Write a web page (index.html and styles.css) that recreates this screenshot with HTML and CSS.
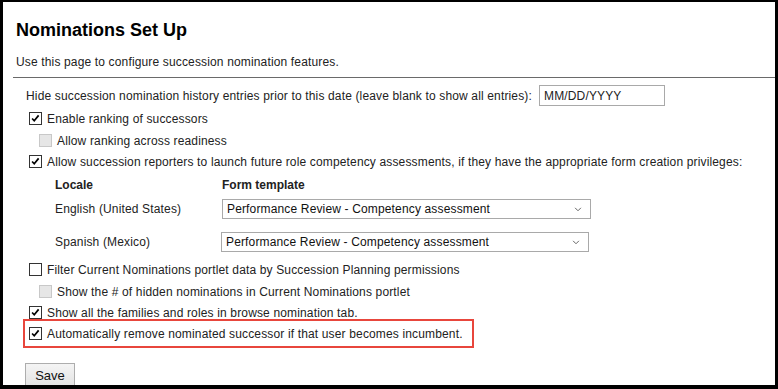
FILE: index.html
```html
<!DOCTYPE html>
<html lang="en">
<head>
    <meta charset="UTF-8">
    <title>Nominations Set Up</title>
    <link rel="stylesheet" href="styles.css">
</head>
<body>
    <div class="frame">
        <div class="panel">
            <h1 class="title">Nominations Set Up</h1>
            <p class="intro">Use this page to configure succession nomination features.</p>

            <div class="settings">
                <div class="row date-row">
                    <label for="historyDate">Hide succession nomination history entries prior to this date (leave blank to show all entries):</label>
                    <input id="historyDate" class="date-input" type="text" value="MM/DD/YYYY">
                </div>

                <div class="row">
                    <span class="box checked"><svg viewBox="0 0 13 13"><path d="M2.5 6.5 L5 9.2 L10.2 2.8"/></svg></span>
                    <span>Enable ranking of successors</span>
                </div>
                <div class="row sub">
                    <span class="box disabled"></span>
                    <span>Allow ranking across readiness</span>
                </div>
                <div class="row tight">
                    <span class="box checked"><svg viewBox="0 0 13 13"><path d="M2.5 6.5 L5 9.2 L10.2 2.8"/></svg></span>
                    <span>Allow succession reporters to launch future role competency assessments, if they have the appropriate form creation privileges:</span>
                </div>

                <div class="locales">
                    <div class="locale-head">
                        <span class="locale-name">Locale</span>
                        <span>Form template</span>
                    </div>
                    <div class="locale-row">
                        <span class="locale-name">English (United States)</span>
                        <div class="select">
                            <span>Performance Review - Competency assessment</span>
                            <svg viewBox="0 0 9 6"><path d="M1 1 L4.5 4.5 L8 1"/></svg>
                        </div>
                    </div>
                    <div class="locale-row spaced">
                        <span class="locale-name">Spanish (Mexico)</span>
                        <div class="select narrow">
                            <span>Performance Review - Competency assessment</span>
                            <svg viewBox="0 0 9 6"><path d="M1 1 L4.5 4.5 L8 1"/></svg>
                        </div>
                    </div>
                </div>

                <div class="row filter-row">
                    <span class="box"></span>
                    <span>Filter Current Nominations portlet data by Succession Planning permissions</span>
                </div>
                <div class="row sub">
                    <span class="box disabled"></span>
                    <span>Show the # of hidden nominations in Current Nominations portlet</span>
                </div>
                <div class="row tight">
                    <span class="box checked"><svg viewBox="0 0 13 13"><path d="M2.5 6.5 L5 9.2 L10.2 2.8"/></svg></span>
                    <span>Show all the families and roles in browse nomination tab.</span>
                </div>

                <div class="highlight">
                    <div class="row">
                        <span class="box checked"><svg viewBox="0 0 13 13"><path d="M2.5 6.5 L5 9.2 L10.2 2.8"/></svg></span>
                        <span>Automatically remove nominated successor if that user becomes incumbent.</span>
                    </div>
                </div>

                <button type="button" class="save">Save</button>
            </div>
        </div>
    </div>
</body>
</html>
```

FILE: styles.css
```css
body {
    margin: 0;
    background-color: #000;
    font-family: "Liberation Sans", Arial, sans-serif;
    color: #222;
}
.frame {
    height: 389px;
    padding: 2px 3px 4px 3px;
    box-sizing: border-box;
}
.panel {
    height: 100%;
    background-color: #fff;
    overflow: hidden;
    padding: 17px 0 0 10px;
    box-sizing: border-box;
}
.title {
    margin: 0 0 0 3px;
    font-size: 18px;
    line-height: 22px;
    font-weight: bold;
    color: #000;
}
.intro {
    margin: 13px 0 7px 3px;
    font-size: 12px;
    line-height: 16px;
    letter-spacing: 0.15px;
}
.settings {
    border-top: 1px solid #6a6a6a;
    padding-top: 7px;
    font-size: 12px;
    letter-spacing: 0.15px;
}
.row {
    display: flex;
    align-items: center;
    gap: 5px;
    height: 21px;
    padding-left: 16px;
    white-space: nowrap;
}
.row + .row {
    margin-top: 1px;
}
.row.tight {
    margin-top: 0;
}
.date-row {
    padding-left: 13px;
    gap: 7px;
    margin-bottom: 2px;
}
.date-input {
    width: 126px;
    height: 21px;
    box-sizing: border-box;
    border: 1px solid #a9a9a9;
    padding: 0 4px;
    font: 12px "Liberation Sans", Arial, sans-serif;
    letter-spacing: 0.15px;
    color: #222;
    outline: none;
}
.row.sub {
    padding-left: 26px;
}
.box {
    width: 13px;
    height: 13px;
    box-sizing: border-box;
    border: 1px solid #333;
    background-color: #fff;
    flex: none;
    display: flex;
}
.box svg {
    width: 11px;
    height: 11px;
    fill: none;
    stroke: #000;
    stroke-width: 2;
}
.box.disabled {
    border-color: #c8c8c8;
    background-color: #e6e6e6;
}
.locales {
    margin-top: 3px;
    padding-left: 42px;
}
.locale-head,
.locale-row {
    display: flex;
    align-items: center;
    height: 20px;
}
.locale-head {
    font-weight: bold;
    letter-spacing: 0;
    margin-bottom: 4px;
}
.locale-row.spaced {
    margin-top: 13px;
}
.locale-name {
    width: 167px;
    flex: none;
}
.select {
    width: 369px;
    height: 20px;
    box-sizing: border-box;
    border: 1px solid #a9a9a9;
    display: flex;
    align-items: center;
    justify-content: space-between;
    padding: 0 8px 0 4px;
    color: #111;
}
.select.narrow {
    width: 368px;
    margin-left: -1px;
}
.select svg {
    width: 8px;
    height: 5px;
    fill: none;
    stroke: #666;
    stroke-width: 1.2;
}
.filter-row {
    margin-top: 7px;
}
.highlight {
    width: 451px;
    box-sizing: border-box;
    margin: -4px 0 0 10px;
    border: 2px solid #e8463c;
    padding: 2px 0;
    position: relative;
}
.highlight .row {
    padding-left: 4px;
}
.save {
    display: block;
    margin: 15px 0 0 12px;
    width: 50px;
    height: 24px;
    border: 1px solid #adadad;
    background: linear-gradient(#f4f4f4, #e3e3e3);
    font: 13px "Liberation Sans", Arial, sans-serif;
    color: #111;
    padding: 0;
}
```
